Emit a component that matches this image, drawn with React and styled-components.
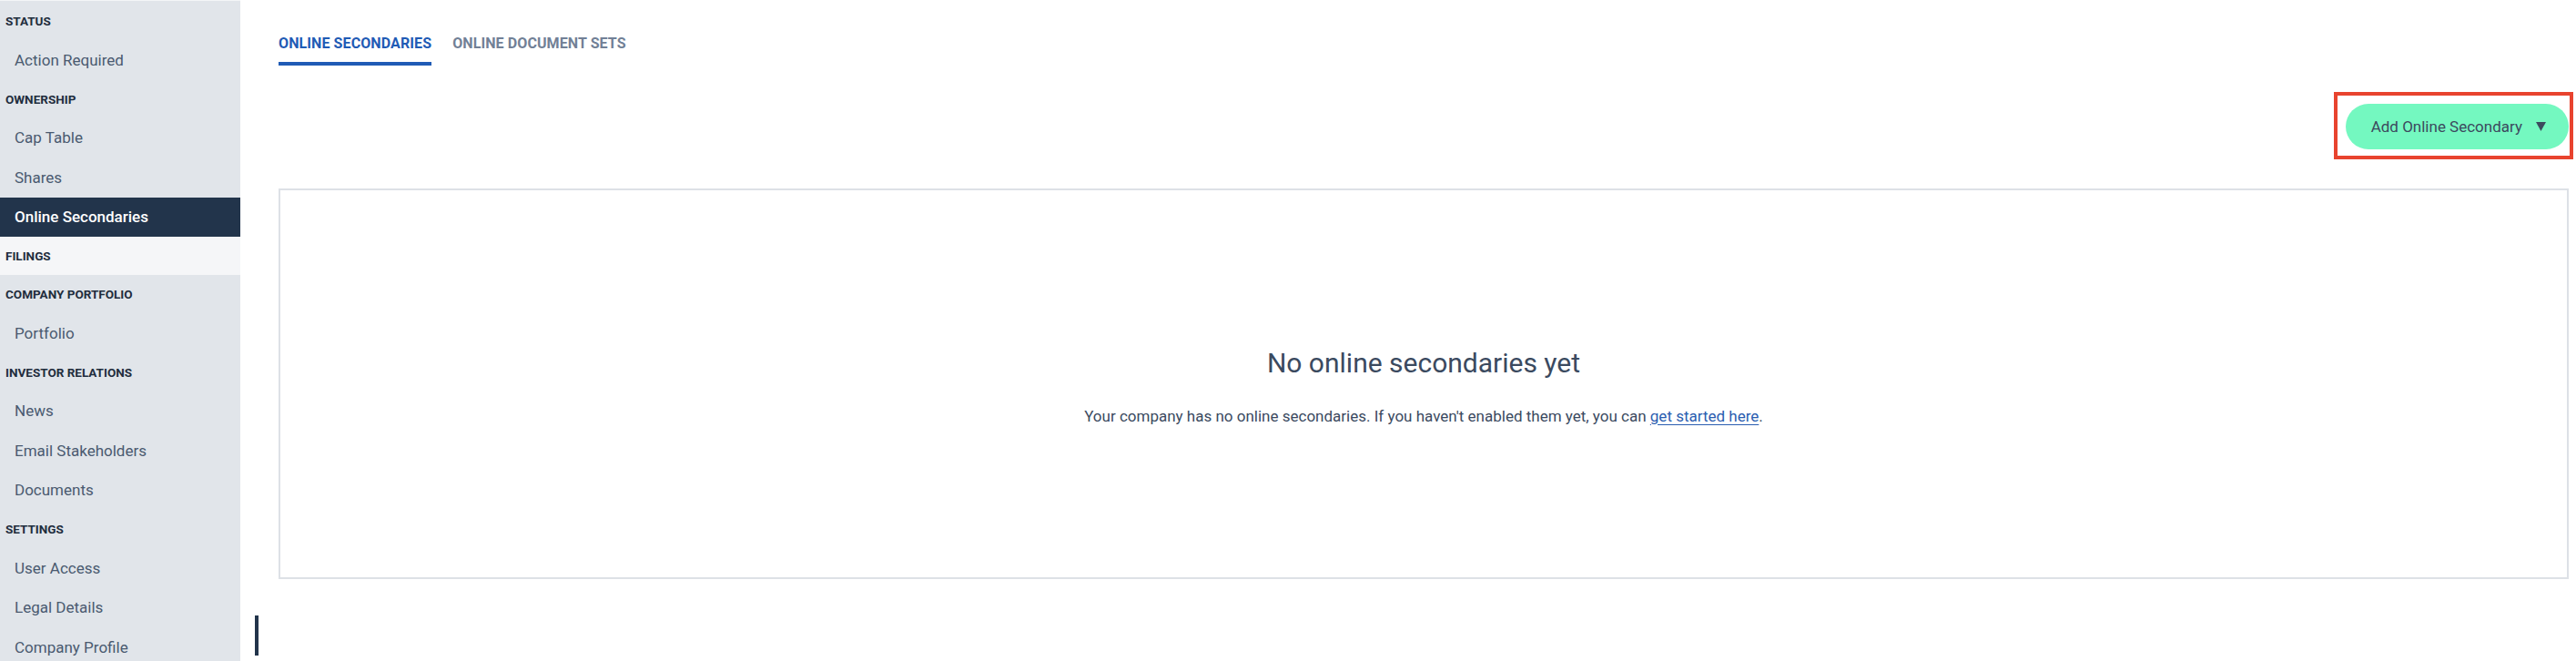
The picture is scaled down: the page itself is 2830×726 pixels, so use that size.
import styled, { createGlobalStyle } from 'styled-components';

const SIDEBAR_WIDTH = 264;

const GlobalStyle = createGlobalStyle`
  html, body {
    margin: 0;
    padding: 0;
    background: #ffffff;
  }
  body {
    font-family: Roboto, "Liberation Sans", Arial, sans-serif;
    -webkit-font-smoothing: antialiased;
  }
`;

const Layout = styled.div`
  display: flex;
  height: 726px;
  overflow: hidden;
`;

const Sidebar = styled.nav`
  width: ${SIDEBAR_WIDTH}px;
  flex-shrink: 0;
  background-color: #e1e5ea;
  padding-top: 1px;
  border-top: 1px solid #f3f5f7;
  box-sizing: border-box;
  display: flex;
  flex-direction: column;
`;

const SectionHeading = styled.div`
  height: 42px;
  display: flex;
  align-items: center;
  padding-left: 6px;
  font-size: 13.5px;
  font-weight: 700;
  text-transform: uppercase;
  color: #1f2d3d;
  background-color: ${({ $highlight }) => ($highlight ? '#f5f6f8' : 'transparent')};
`;

const NavItem = styled.a`
  height: 43.5px;
  display: flex;
  align-items: center;
  padding-left: 16px;
  font-size: 17px;
  font-weight: ${({ $active }) => ($active ? 500 : 400)};
  color: ${({ $active }) => ($active ? '#ffffff' : '#4a5a70')};
  background-color: ${({ $active }) => ($active ? '#22344b' : 'transparent')};
  text-decoration: none;
  cursor: pointer;
`;

const Main = styled.main`
  flex: 1;
  min-width: 0;
  padding: 0 8px 0 42px;
  display: flex;
  flex-direction: column;
`;

const Tabs = styled.div`
  display: flex;
  gap: 23px;
`;

const Tab = styled.button`
  border: 0;
  background: none;
  margin: 0;
  padding: 40px 0 12px;
  font-family: inherit;
  font-size: 16px;
  line-height: 16px;
  font-weight: 700;
  letter-spacing: 0.1px;
  text-transform: uppercase;
  color: ${({ $active }) => ($active ? '#1f5bb5' : '#718096')};
  border-bottom: 4px solid ${({ $active }) => ($active ? '#1f5bb5' : 'transparent')};
  cursor: pointer;
`;

const ActionRow = styled.div`
  display: flex;
  justify-content: flex-end;
  margin-top: 42px;
`;

const Highlight = styled.div`
  position: relative;
`;

const Annotation = styled.span`
  position: absolute;
  top: -13px;
  left: -13px;
  right: -5px;
  bottom: -11px;
  border: 4px solid #e8432e;
  pointer-events: none;
`;

const PrimaryButton = styled.button`
  display: flex;
  align-items: center;
  gap: 15px;
  height: 50px;
  padding: 0 25px 0 28px;
  border: 0;
  border-radius: 25px;
  background-color: #74f8c0;
  font-family: inherit;
  font-size: 17px;
  color: #3c4a5e;
  cursor: pointer;
`;

const Caret = styled.svg`
  width: 11px;
  height: 10px;
  fill: #3c4a5e;
`;

const EmptyCard = styled.section`
  margin-top: 43px;
  height: 429px;
  box-sizing: border-box;
  border: 2px solid #dde1e6;
  padding-top: 6px;
  display: flex;
  flex-direction: column;
  align-items: center;
  justify-content: center;
  color: #3b4a5f;
`;

const EmptyTitle = styled.h2`
  margin: 0 0 28px;
  font-size: 30px;
  line-height: 36px;
  font-weight: 400;
`;

const EmptyText = styled.p`
  margin: 0;
  font-size: 17px;
  line-height: 24px;
`;

const TextLink = styled.a`
  color: #2a5db0;
  text-decoration: underline;
  text-underline-offset: 3px;
`;

const Cursor = styled.div`
  width: 4px;
  height: 44px;
  margin: 40px 0 0 -26px;
  background-color: #22344b;
`;

const NAV = [
  { heading: 'Status', items: ['Action Required'] },
  { heading: 'Ownership', items: ['Cap Table', 'Shares', 'Online Secondaries'] },
  { heading: 'Filings', items: [], highlight: true },
  { heading: 'Company Portfolio', items: ['Portfolio'] },
  { heading: 'Investor Relations', items: ['News', 'Email Stakeholders', 'Documents'] },
  { heading: 'Settings', items: ['User Access', 'Legal Details', 'Company Profile'] },
];

const ACTIVE_ITEM = 'Online Secondaries';

const App = () => (
  <>
    <GlobalStyle />
    <Layout>
      <Sidebar>
        {NAV.map((section) => (
          <div key={section.heading}>
            <SectionHeading $highlight={section.highlight}>{section.heading}</SectionHeading>
            {section.items.map((item) => (
              <NavItem key={item} $active={item === ACTIVE_ITEM}>
                {item}
              </NavItem>
            ))}
          </div>
        ))}
      </Sidebar>
      <Main>
        <Tabs>
          <Tab $active>Online Secondaries</Tab>
          <Tab>Online Document Sets</Tab>
        </Tabs>
        <ActionRow>
          <Highlight>
            <PrimaryButton>
              Add Online Secondary
              <Caret viewBox="0 0 11 10">
                <path d="M0 0h11L5.5 10z" />
              </Caret>
            </PrimaryButton>
            <Annotation />
          </Highlight>
        </ActionRow>
        <EmptyCard>
          <EmptyTitle>No online secondaries yet</EmptyTitle>
          <EmptyText>
            Your company has no online secondaries. If you haven't enabled them yet, you can{' '}
            <TextLink href="#">get started here</TextLink>.
          </EmptyText>
        </EmptyCard>
        <Cursor />
      </Main>
    </Layout>
  </>
);

export default App;
